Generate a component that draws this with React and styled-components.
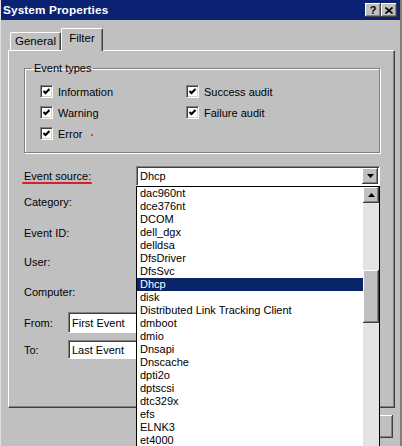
import React from 'react';
import styled, { createGlobalStyle } from 'styled-components';

const GlobalStyle = createGlobalStyle`
  html, body {
    margin: 0;
    padding: 0;
    background: #c0c0c0;
  }
  body {
    font-family: 'Liberation Sans', Arial, sans-serif;
    font-size: 11px;
    color: #000;
  }
`;

const Window = styled.div`
  position: relative;
  width: 402px;
  height: 446px;
  box-sizing: border-box;
  background: #c0c0c0;
  border-left: 1px solid #e0e0e0;
  border-right: 2px solid #808080;
  overflow: hidden;
  display: flex;
  flex-direction: column;
`;

const TitleBar = styled.div`
  height: 20px;
  flex: none;
  background: #0b2171;
  display: flex;
  align-items: center;
  justify-content: space-between;
  padding: 0 3px 0 2px;
`;

const TitleText = styled.div`
  color: #fff;
  font-weight: 700;
  font-size: 11.8px;
  letter-spacing: 0.1px;
`;

const TitleButtons = styled.div`
  display: flex;
`;

const TitleButton = styled.div`
  width: 16px;
  height: 14px;
  box-sizing: border-box;
  background: #c0c0c0;
  box-shadow: inset -1px -1px #404040, inset 1px 1px #fff, inset -2px -2px #808080;
  display: flex;
  align-items: center;
  justify-content: center;
  font-weight: 700;
  font-size: 11px;
  line-height: 1;
`;

const TabRow = styled.div`
  display: flex;
  align-items: flex-end;
  height: 22px;
  margin-top: 8px;
  padding-left: 9px;
  position: relative;
  z-index: 2;
`;

const Tab = styled.div`
  position: relative;
  height: ${p => (p.$active ? 23 : 18)}px;
  width: ${p => p.$w}px;
  box-sizing: border-box;
  background: #c0c0c0;
  border-top: 1px solid #fff;
  border-left: 1px solid #fff;
  border-right: 1px solid #404040;
  border-top-left-radius: 2px;
  border-top-right-radius: 2px;
  box-shadow: inset -1px 0 #808080;
  display: flex;
  justify-content: center;
  font-size: 11.5px;
  padding-top: ${p => (p.$active ? 3 : 2)}px;
  margin-bottom: ${p => (p.$active ? -1 : 0)}px;
`;

const Panel = styled.div`
  margin: 0 5px 0 7px;
  height: 358px;
  box-sizing: border-box;
  border-top: 1px solid #fff;
  border-left: 1px solid #fff;
  border-right: 1px solid #404040;
  border-bottom: 1px solid #404040;
  box-shadow: inset -1px -1px #808080;
  padding: 0 14px 0 15px;
  display: flex;
  flex-direction: column;
`;

const GroupBox = styled.fieldset`
  margin: 11px 0 0 0;
  padding: 6px 14px 8px 15px;
  border: 1px solid #808080;
  box-shadow: inset 1px 1px #fff, 1px 1px #fff;
  border-radius: 0;
  width: 356px;
  box-sizing: border-box;
`;

const Legend = styled.legend`
  padding: 0 2px;
  margin-left: -8px;
  line-height: 13px;
  font-size: 11px;
`;

const CheckGrid = styled.div`
  display: grid;
  grid-template-columns: 146px 1fr;
  grid-auto-rows: 21px;
`;

const CheckItem = styled.label`
  display: flex;
  align-items: center;
  gap: 5px;
`;

const Box = styled.span`
  width: 13px;
  height: 13px;
  box-sizing: border-box;
  background: #fff;
  border-top: 1px solid #808080;
  border-left: 1px solid #808080;
  border-right: 1px solid #fff;
  border-bottom: 1px solid #fff;
  box-shadow: inset 1px 1px #404040, inset -1px -1px #d4d0c8;
  display: flex;
  align-items: center;
  justify-content: center;
`;

const FormRow = styled.div`
  display: flex;
  align-items: center;
  height: ${p => p.$h || 20}px;
  margin-top: ${p => p.$mt}px;
`;

const Label = styled.span`
  width: ${p => p.$w}px;
  flex: none;
`;

const Combo = styled.div`
  width: ${p => p.$w}px;
  height: ${p => p.$h || 20}px;
  box-sizing: border-box;
  background: #fff;
  border-top: 1px solid #808080;
  border-left: 1px solid #808080;
  border-right: 1px solid #fff;
  border-bottom: 1px solid #fff;
  box-shadow: inset 1px 1px #404040;
  display: flex;
  align-items: center;
  justify-content: space-between;
  padding: 0 1px 0 3px;
`;

const ArrowButton = styled.div`
  width: 16px;
  height: 16px;
  flex: none;
  box-sizing: border-box;
  background: #c0c0c0;
  box-shadow: inset -1px -1px #404040, inset 1px 1px #fff, inset -2px -2px #808080;
  display: flex;
  align-items: center;
  justify-content: center;
`;

const Footer = styled.div`
  display: flex;
  justify-content: flex-end;
  gap: 6px;
  padding: 7px 7px 0 0;
`;

const Button = styled.div`
  width: 75px;
  height: 23px;
  box-sizing: border-box;
  background: #c0c0c0;
  box-shadow: inset -1px -1px #404040, inset 1px 1px #fff, inset -2px -2px #808080;
  display: flex;
  align-items: center;
  justify-content: center;
`;

const DropList = styled.div`
  position: absolute;
  left: 135px;
  top: 186px;
  width: 244px;
  height: 262px;
  box-sizing: border-box;
  border: 1px solid #000;
  border-bottom: none;
  background: #fff;
  display: flex;
  z-index: 5;
`;

const Items = styled.div`
  flex: 1;
  display: flex;
  flex-direction: column;
`;

const Item = styled.div`
  height: 13px;
  line-height: 13px;
  padding-left: 3px;
  white-space: nowrap;
  background: ${p => (p.$selected ? '#0a246a' : 'transparent')};
  color: ${p => (p.$selected ? '#fff' : '#000')};
`;

const ScrollBar = styled.div`
  width: 16px;
  flex: none;
  display: flex;
  flex-direction: column;
  background: #e3e3e3;
`;

const Thumb = styled.div`
  width: 16px;
  height: ${p => p.$h}px;
  box-sizing: border-box;
  background: #c0c0c0;
  box-shadow: inset -1px -1px #404040, inset 1px 1px #fff, inset -2px -2px #808080;
`;

const RedLine = styled.span`
  position: absolute;
  height: 2px;
  background: #d8202c;
  border-radius: 1px;
`;

const Mark = ({ up }) => (
  <svg width="7" height="4" viewBox="0 0 7 4">
    <polygon points={up ? '3.5,0 7,4 0,4' : '0,0 7,0 3.5,4'} fill="#000" />
  </svg>
);

const Check = () => (
  <svg width="7" height="7" viewBox="0 0 7 7">
    <polyline points="0.5,3 2.5,5 6.5,1" fill="none" stroke="#000" strokeWidth="2" />
  </svg>
);

const CheckBox = ({ label }) => (
  <CheckItem>
    <Box><Check /></Box>
    {label}
  </CheckItem>
);

const sources = [
  'dac960nt', 'dce376nt', 'DCOM', 'dell_dgx', 'delldsa', 'DfsDriver', 'DfsSvc',
  'Dhcp', 'disk', 'Distributed Link Tracking Client', 'dmboot', 'dmio', 'Dnsapi',
  'Dnscache', 'dpti2o', 'dptscsi', 'dtc329x', 'efs', 'ELNK3', 'et4000',
];

export default function App() {
  return (
    <>
      <GlobalStyle />
      <Window>
        <TitleBar>
          <TitleText>System Properties</TitleText>
          <TitleButtons>
            <TitleButton>?</TitleButton>
            <TitleButton>
              <svg width="8" height="7" viewBox="0 0 8 7">
                <path d="M0.5 0.5 L7.5 6.5 M7.5 0.5 L0.5 6.5" stroke="#000" strokeWidth="1.6" />
              </svg>
            </TitleButton>
          </TitleButtons>
        </TitleBar>

        <TabRow>
          <Tab $w={51}>General</Tab>
          <Tab $w={42} $active>Filter</Tab>
        </TabRow>

        <Panel>
          <GroupBox>
            <Legend>Event types</Legend>
            <CheckGrid>
              <CheckBox label="Information" />
              <CheckBox label="Success audit" />
              <CheckBox label="Warning" />
              <CheckBox label="Failure audit" />
              <CheckBox label="Error" />
            </CheckGrid>
          </GroupBox>

          <FormRow $mt={13}>
            <Label $w={112}>Event source:</Label>
            <Combo $w={244}>
              Dhcp
              <ArrowButton><Mark /></ArrowButton>
            </Combo>
          </FormRow>
          <FormRow $mt={6}><Label $w={112}>Category:</Label></FormRow>
          <FormRow $mt={11}><Label $w={112}>Event ID:</Label></FormRow>
          <FormRow $mt={9}><Label $w={112}>User:</Label></FormRow>
          <FormRow $mt={10}><Label $w={112}>Computer:</Label></FormRow>
          <FormRow $mt={10} $h={21}>
            <Label $w={44}>From:</Label>
            <Combo $w={160} $h={21}>First Event</Combo>
          </FormRow>
          <FormRow $mt={7} $h={19}>
            <Label $w={44}>To:</Label>
            <Combo $w={160} $h={19}>Last Event</Combo>
          </FormRow>
        </Panel>

        <Footer>
          <Button>OK</Button>
          <Button>Cancel</Button>
        </Footer>

        <DropList>
          <Items>
            {sources.map(s => (
              <Item key={s} $selected={s === 'Dhcp'}>{s}</Item>
            ))}
          </Items>
          <ScrollBar>
            <ArrowButton><Mark up /></ArrowButton>
            <div style={{ height: 67 }} />
            <Thumb $h={53} />
          </ScrollBar>
        </DropList>

        <RedLine style={{ left: 63, top: 44, width: 30 }} />
        <RedLine style={{ left: 21, top: 182, width: 70 }} />
        <RedLine style={{ left: 90, top: 134, width: 2, height: 2 }} />
      </Window>
    </>
  );
}
